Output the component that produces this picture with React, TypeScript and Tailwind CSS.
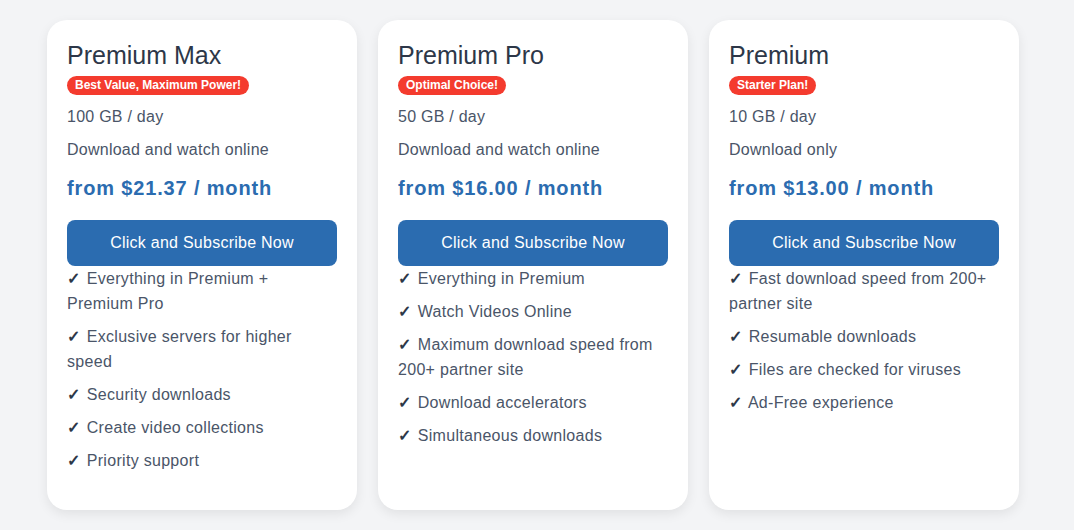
import React from "react";

interface Plan {
  name: string;
  badge: string;
  quota: string;
  mode: string;
  price: string;
  features: string[];
}

const plans: Plan[] = [
  {
    name: "Premium Max",
    badge: "Best Value, Maximum Power!",
    quota: "100 GB / day",
    mode: "Download and watch online",
    price: "from $21.37 / month",
    features: [
      "Everything in Premium + Premium Pro",
      "Exclusive servers for higher speed",
      "Security downloads",
      "Create video collections",
      "Priority support",
    ],
  },
  {
    name: "Premium Pro",
    badge: "Optimal Choice!",
    quota: "50 GB / day",
    mode: "Download and watch online",
    price: "from $16.00 / month",
    features: [
      "Everything in Premium",
      "Watch Videos Online",
      "Maximum download speed from 200+ partner site",
      "Download accelerators",
      "Simultaneous downloads",
    ],
  },
  {
    name: "Premium",
    badge: "Starter Plan!",
    quota: "10 GB / day",
    mode: "Download only",
    price: "from $13.00 / month",
    features: [
      "Fast download speed from 200+ partner site",
      "Resumable downloads",
      "Files are checked for viruses",
      "Ad-Free experience",
    ],
  },
];

const PlanCard = ({ plan }: { plan: Plan }) => (
  <div className="w-[310px] bg-white rounded-[20px] shadow-[0_4px_12px_rgba(0,0,0,0.08)] px-5 pt-5 pb-[37px]">
    <h2 className="text-[25px] leading-[1.2] text-[#2d3748]">{plan.name}</h2>
    <span className="inline-block mt-[6px] px-2 rounded-full bg-[#f43b2e] text-white text-[12px] leading-[19px] font-semibold">
      {plan.badge}
    </span>
    <p className="mt-[8px] text-[16px] leading-[25px] tracking-[0.25px] text-[#4a5568]">{plan.quota}</p>
    <p className="mt-2 text-[16px] leading-[25px] tracking-[0.25px] text-[#4a5568]">{plan.mode}</p>
    <p className="mt-3 text-[20px] leading-[28px] tracking-[0.85px] font-bold text-[#2b6cb0]">{plan.price}</p>
    <button className="mt-[18px] w-full h-[46px] rounded-lg bg-[#2b6cb0] text-white text-[16px] tracking-[0.25px]">
      Click and Subscribe Now
    </button>
    <ul className="space-y-2">
      {plan.features.map((f) => (
        <li key={f} className="text-[16px] leading-[25px] tracking-[0.3px] text-[#4a5568]">
          <span className="inline-block w-[15px] font-bold text-[#2d3748]">✓</span> {f}
        </li>
      ))}
    </ul>
  </div>
);

const App = () => {
  return (
    <div className="min-h-[530px] bg-[#f3f4f6] font-['Liberation_Sans',Arial,sans-serif]">
      <div className="flex items-stretch gap-[21px] pl-[47px] pt-5">
        {plans.map((p) => (
          <PlanCard key={p.name} plan={p} />
        ))}
      </div>
    </div>
  );
};

export default App;
